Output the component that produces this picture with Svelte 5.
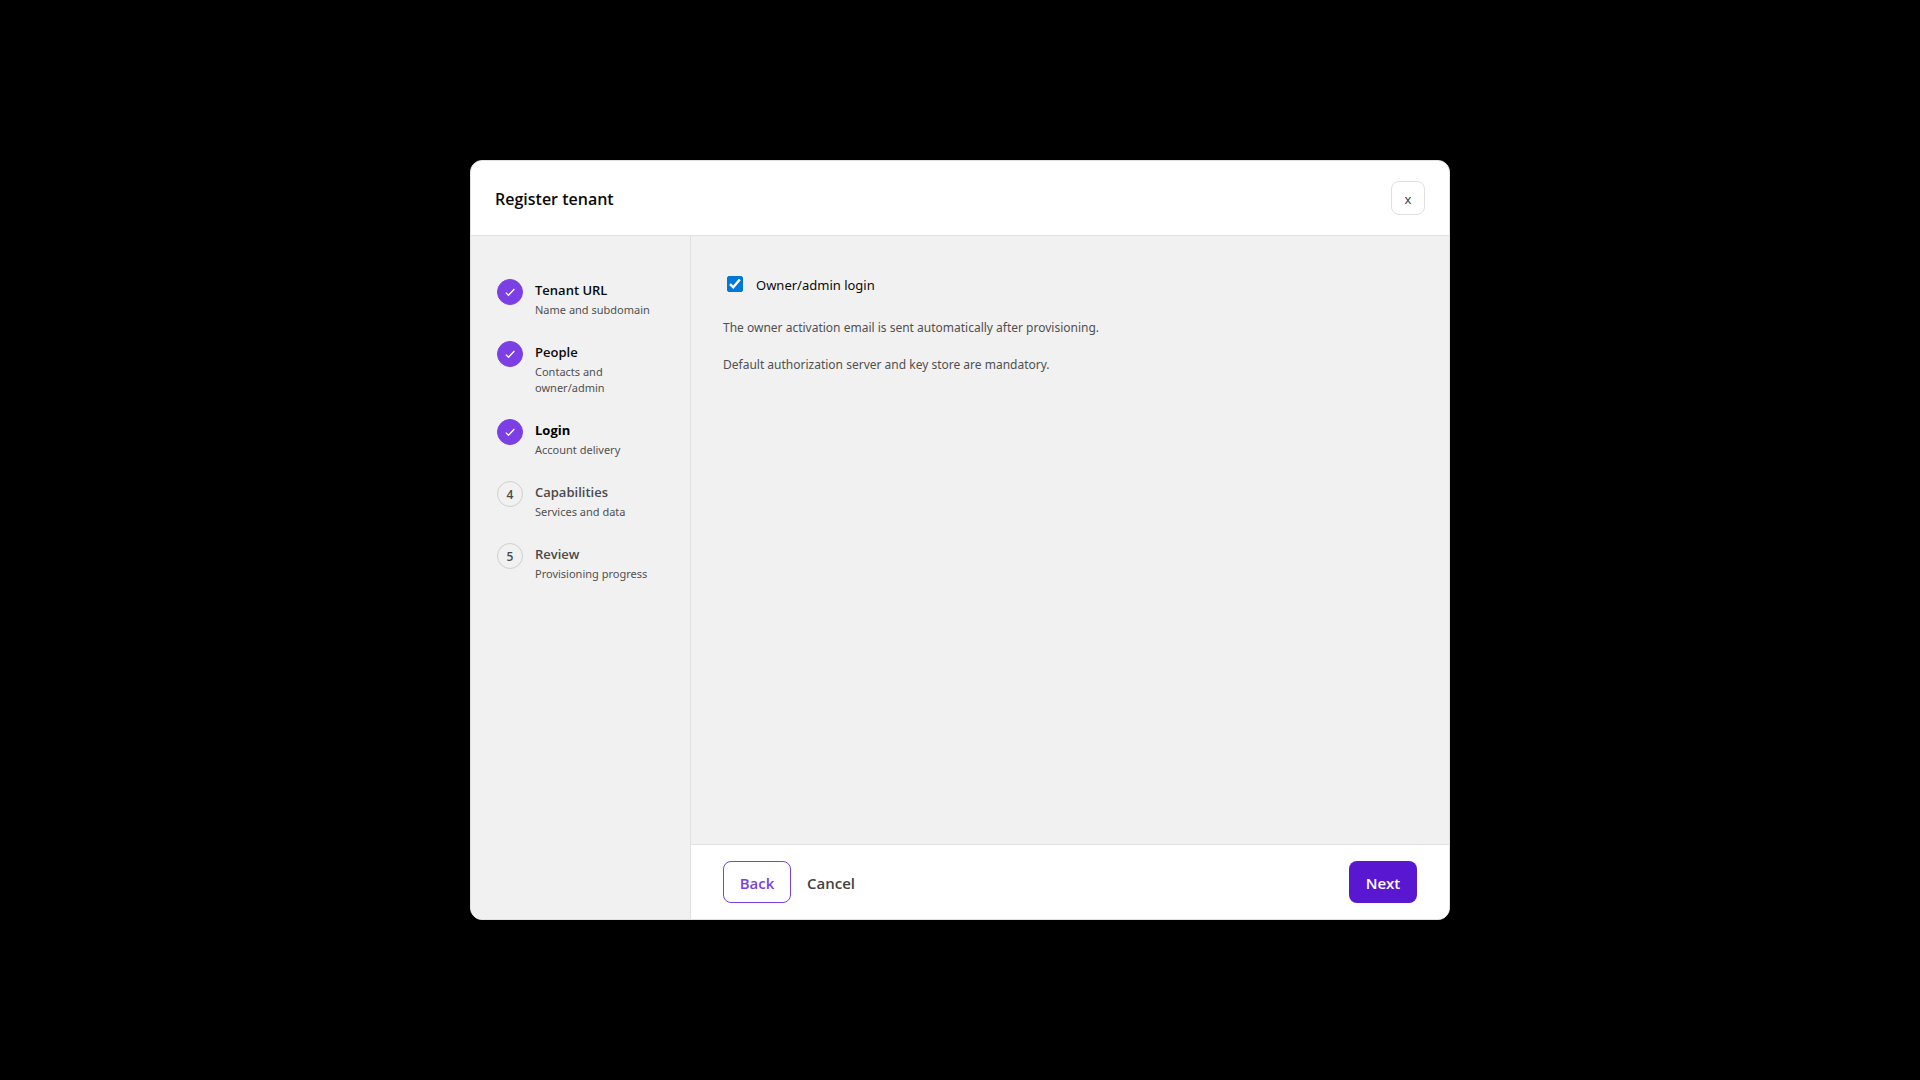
<script>
  const steps = [
    { title: 'Tenant URL', detail: 'Name and subdomain', state: 'done' },
    { title: 'People', detail: 'Contacts and owner/admin', state: 'done' },
    { title: 'Login', detail: 'Account delivery', state: 'current' },
    { title: 'Capabilities', detail: 'Services and data', state: 'todo' },
    { title: 'Review', detail: 'Provisioning progress', state: 'todo' }
  ];
  let ownerLogin = $state(true);
</script>

<div class="backdrop">
  <div class="dialog" role="dialog" aria-modal="true" aria-labelledby="dialog-title">
    <header>
      <h1 id="dialog-title">Register tenant</h1>
      <button type="button" class="close" aria-label="Close">x</button>
    </header>
    <div class="body">
      <nav aria-label="Registration steps">
        <ol>
          {#each steps as step, i}
            <li class={step.state} aria-current={step.state === 'current' ? 'step' : undefined}>
              <span class="marker">
                {#if step.state === 'todo'}
                  {i + 1}
                {:else}
                  <svg viewBox="0 0 12 12" aria-hidden="true"><path d="M1.8 6.6 4.5 9.3 10.4 3" /></svg>
                {/if}
              </span>
              <span class="text">
                <span class="title">{step.title}</span>
                <span class="detail">{step.detail}</span>
              </span>
            </li>
          {/each}
        </ol>
      </nav>
      <div class="panel">
        <main>
          <label>
            <span class="check">
              <input type="checkbox" bind:checked={ownerLogin} />
              {#if ownerLogin}
                <svg viewBox="0 0 16 16" aria-hidden="true"><path d="M3 8.2 6.3 11.3 12.8 3.6" /></svg>
              {/if}
            </span>
            <span class="label-text">Owner/admin login</span>
          </label>
          <p>The owner activation email is sent automatically after provisioning.</p>
          <p>Default authorization server and key store are mandatory.</p>
        </main>
        <footer>
          <button type="button" class="back">Back</button>
          <button type="button" class="cancel">Cancel</button>
          <button type="button" class="next">Next</button>
        </footer>
      </div>
    </div>
  </div>
</div>

<style>
  :global(body) {
    background: #000;
  }
  .backdrop {
    min-height: 100vh;
    box-sizing: border-box;
    padding: 24px;
    display: flex;
    align-items: center;
    justify-content: center;
    font-family: 'Segoe UI', 'Noto Sans', 'Open Sans', sans-serif;
    color: #0a0a0a;
  }
  .dialog {
    box-sizing: border-box;
    width: 100%;
    max-width: 980px;
    min-height: 760px;
    display: flex;
    flex-direction: column;
    border: 1px solid #e0e0e0;
    border-radius: 12px;
    background: #fff;
    overflow: hidden;
  }
  header {
    display: flex;
    align-items: center;
    justify-content: space-between;
    padding: 20px 24px;
    border-bottom: 1px solid #e0e0e0;
  }
  h1,
  .title,
  .marker,
  footer button {
    font-family: 'Segoe UI', 'Open Sans', sans-serif;
    font-weight: 600;
  }
  h1 {
    margin: 0;
    padding-top: 2px;
    font-size: 16px;
    line-height: 24px;
  }
  button {
    box-sizing: border-box;
    font-family: inherit;
    cursor: pointer;
  }
  .close {
    width: 34px;
    height: 34px;
    padding: 2px 0 0;
    border: 1px solid #e0e0e0;
    border-radius: 8px;
    background: #fff;
    color: #424242;
    font-size: 13px;
    line-height: 20px;
  }
  .body {
    flex: 1;
    display: grid;
    grid-template-columns: 220px 1fr;
    background: #f1f1f1;
  }
  nav {
    padding: 42px 24px 24px 26px;
    border-right: 1px solid #e0e0e0;
  }
  ol {
    margin: 0;
    padding: 0;
    list-style: none;
    display: flex;
    flex-direction: column;
    gap: 22px;
  }
  li {
    display: flex;
    gap: 12px;
  }
  .marker {
    box-sizing: border-box;
    flex: none;
    width: 26px;
    height: 26px;
    margin-top: 1px;
    display: flex;
    align-items: center;
    justify-content: center;
    border: 1px solid #7b3fe4;
    border-radius: 50%;
    background: #7b3fe4;
    font-size: 12px;
    line-height: 16px;
  }
  .marker svg {
    width: 12px;
    height: 12px;
    fill: none;
    stroke: #fff;
    stroke-width: 1.3;
  }
  .text {
    display: flex;
    flex-direction: column;
  }
  .title {
    font-size: 13px;
    line-height: 24px;
  }
  .detail {
    font-size: 11px;
    line-height: 16px;
    color: #505050;
  }
  .current .title {
    font-weight: 700;
    color: #000;
  }
  .todo .title,
  .todo .marker {
    color: #4a4a4a;
  }
  .todo .marker {
    padding-top: 1px;
    border-color: #cfcfcf;
    background: #f1f1f1;
  }
  .panel {
    display: flex;
    flex-direction: column;
  }
  main {
    flex: 1;
    padding: 35px 32px;
  }
  label {
    display: flex;
    align-items: center;
    gap: 13px;
    padding-left: 4px;
    margin-bottom: 21px;
    font-size: 13px;
    line-height: 24px;
  }
  .label-text {
    padding-top: 2px;
  }
  .check {
    display: grid;
    width: 16px;
    height: 16px;
  }
  .check input,
  .check svg {
    grid-area: 1 / 1;
    width: 16px;
    height: 16px;
    margin: 0;
  }
  .check input {
    appearance: none;
    box-sizing: border-box;
    border: 1px solid #767676;
    border-radius: 2px;
    background: #fff;
  }
  .check input:checked {
    border-color: #0078d7;
    background: #0078d7;
  }
  .check svg {
    fill: none;
    stroke: #fff;
    stroke-width: 2.4;
    pointer-events: none;
  }
  p {
    margin: 0 0 17px;
    font-size: 12px;
    line-height: 20px;
    color: #505050;
  }
  footer {
    display: flex;
    align-items: center;
    padding: 16px 32px;
    border-top: 1px solid #e0e0e0;
    background: #fff;
  }
  footer button {
    min-width: 68px;
    height: 42px;
    padding: 2px 15px 0;
    border: 1px solid transparent;
    border-radius: 8px;
    font-size: 15px;
    line-height: 22px;
  }
  .back {
    border-color: #7b3fe4;
    background: #fff;
    color: #7b3fe4;
  }
  .cancel {
    background: transparent;
    color: #424242;
  }
  .next {
    margin-left: auto;
    background: #5a17d2;
    color: #fff;
  }
</style>
